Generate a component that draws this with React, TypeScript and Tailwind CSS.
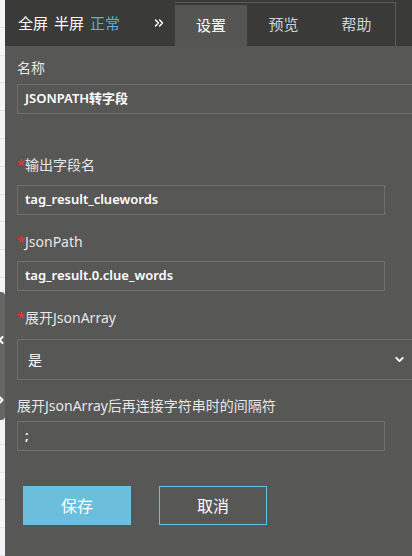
import React from 'react';
import { ChevronDown, ChevronLeft, ChevronRight, ChevronsRight } from 'lucide-react';

const font = { fontFamily: '"Noto Sans", "Noto Sans CJK SC", sans-serif' };

const Label: React.FC<{ text: string; required?: boolean; className?: string }> = ({ text, required, className }) => (
  <div className={`flex items-center h-5 text-[14px] text-[#e6e6e6] ${className ?? ''}`}>
    {required && <span className="text-[#ff2b2b] w-[7px] mr-[1px]">*</span>}
    {text}
  </div>
);

const Field: React.FC<{ value: string; wide?: boolean; className?: string }> = ({ value, wide, className }) => (
  <div
    className={`h-[30px] shrink-0 border border-[#6f6f6d] flex items-center pl-[7px] text-[13px] font-semibold text-white ${
      wide ? 'w-[400px]' : 'w-[368px]'
    } ${className ?? ''}`}
  >
    {value}
  </div>
);

const App: React.FC = () => {
  return (
    <div className="relative flex w-[412px] h-[556px] overflow-hidden bg-[#575755]" style={font}>
      {/* left edge of the page behind */}
      <div className="w-[5px] shrink-0 bg-[#f4f4f7] flex flex-col">
        {Array.from({ length: 20 }).map((_, i) => (
          <div key={i} className="h-[28px] border-b border-[#e4e4e8]" />
        ))}
      </div>
      <div className="absolute left-0 top-[292px] w-[5px] h-[128px] bg-[#656563] rounded-r-sm" />
      <ChevronLeft size={12} strokeWidth={4} className="absolute left-[-5px] top-[334px] text-white" />
      <ChevronRight size={12} strokeWidth={4} className="absolute left-[-5px] top-[394px] text-white" />

      <div className="flex-1 flex flex-col">
        {/* header */}
        <div className="h-[46px] shrink-0 bg-[#3a3a38] flex items-stretch">
          <div className="flex items-center gap-[6px] pl-[13px] text-[15px] text-white w-[170px]">
            <span>全屏</span>
            <span>半屏</span>
            <span className="text-[#4fb2df]">正常</span>
            <ChevronsRight size={14} strokeWidth={2.5} className="ml-[26px] text-white" />
          </div>
          <div className="mt-[2px] w-[221px] border-t border-r border-[#5a5a58] flex items-stretch text-[15px]">
            <div className="w-[72px] mt-[2px] bg-[#555553] flex items-center justify-center text-white">设置</div>
            <div className="w-[73px] flex items-center justify-center text-[#c9d4da]">预览</div>
            <div className="w-[73px] flex items-center justify-center text-[#c9d4da]">帮助</div>
          </div>
        </div>

        {/* form */}
        <div className="flex flex-col pl-[12px] pt-[11px]">
          <Label text="名称" />
          <Field value="JSONPATH转字段" wide className="mt-[7px]" />

          <Label text="输出字段名" required className="mt-[40px]" />
          <Field value="tag_result_cluewords" className="mt-[11px]" />

          <Label text="JsonPath" required className="mt-[16px]" />
          <Field value="tag_result.0.clue_words" className="mt-[10px]" />

          <Label text="展开JsonArray" required className="mt-[16px]" />
          <div className="mt-[12px] h-[41px] w-[400px] border border-[#6f6f6d] flex items-center justify-between pl-[10px] pr-[10px] text-[14px] text-white">
            <span>是</span>
            <ChevronDown size={13} strokeWidth={3.5} className="text-white" />
          </div>

          <Label text="展开JsonArray后再连接字符串时的间隔符" className="mt-[15px]" />
          <Field value=";" className="mt-[6px]" />

          <div className="flex gap-[28px] mt-[35px] pl-[6px]">
            <button className="w-[108px] h-[39px] bg-[#6bbfdd] text-white text-[16px]">保存</button>
            <button className="w-[108px] h-[39px] border border-[#5fc0e8] text-white text-[16px]">取消</button>
          </div>
        </div>
      </div>
    </div>
  );
};

export default App;
